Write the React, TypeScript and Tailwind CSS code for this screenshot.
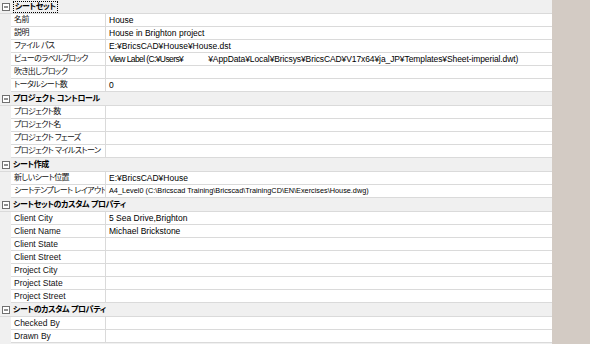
import React from 'react';

type Row = { name: string; value?: React.ReactNode };
type Section = { title: string; focus?: boolean; rows: Row[] };

const sections: Section[] = [
  {
    title: 'シートセット',
    focus: true,
    rows: [
      { name: '名前', value: 'House' },
      { name: '説明', value: 'House in Brighton project' },
      { name: 'ファイル パス', value: 'E:¥BricsCAD¥House¥House.dst' },
      {
        name: 'ビューのラベルブロック',
        value: (
          <>
            <span className="tracking-[-0.6px]">View Label (C:¥Users¥</span>
            <span className="inline-block w-[25px]" />
            <span className="tracking-[-0.1px]">¥AppData¥Local¥Bricsys¥BricsCAD¥V17x64¥ja_JP¥Templates¥Sheet-imperial.dwt)</span>
          </>
        ),
      },
      { name: '吹き出しブロック' },
      { name: 'トータルシート数', value: '0' },
    ],
  },
  {
    title: 'プロジェクト コントロール',
    rows: [
      { name: 'プロジェクト数' },
      { name: 'プロジェクト名' },
      { name: 'プロジェクト フェーズ' },
      { name: 'プロジェクト マイルストーン' },
    ],
  },
  {
    title: 'シート作成',
    rows: [
      { name: '新しいシート位置', value: 'E:¥BricsCAD¥House' },
      {
        name: 'シートテンプレート レイアウト',
        value: (
          <span className="text-[7.3px]">
            A4_Level0 (C:\Bricscad Training\Bricscad\TrainingCD\EN\Exercises\House.dwg)
          </span>
        ),
      },
    ],
  },
  {
    title: 'シートセットのカスタム プロパティ',
    rows: [
      { name: 'Client City', value: '5 Sea Drive,Brighton' },
      { name: 'Client Name', value: 'Michael Brickstone' },
      { name: 'Client State' },
      { name: 'Client Street' },
      { name: 'Project City' },
      { name: 'Project State' },
      { name: 'Project Street' },
    ],
  },
  {
    title: 'シートのカスタム プロパティ',
    rows: [{ name: 'Checked By' }, { name: 'Drawn By' }],
  },
];

const isJp = (s: string) => /[^\x00-\x7F]/.test(s);

function Toggle() {
  return (
    <svg width="8" height="8" viewBox="0 0 8 8" className="shrink-0">
      <rect x="0.5" y="0.5" width="7" height="7" fill="#fff" stroke="#707070" />
      <line x1="2" y1="4" x2="6" y2="4" stroke="#222" />
    </svg>
  );
}

export default function App() {
  return (
    <div className="flex w-[590px] h-[344px] overflow-hidden bg-[#f0f0f0] text-black text-[8.5px] leading-none font-['Liberation_Sans','Noto_Sans_CJK_JP',sans-serif] [font-feature-settings:'palt']">
      <div className="w-[552px] shrink-0">
        {sections.map((s) => (
          <div key={s.title}>
            {/* section header */}
            <div className="flex items-center h-[14px] border-b border-[#dadada] bg-[#f0f0f0] pl-[2px]">
              <Toggle />
              <span
                className={
                  'ml-[3px] font-bold text-[8px] tracking-[-0.4px] ' +
                  (s.focus ? 'border border-dotted border-black px-[1px] py-[1px]' : '')
                }
              >
                {s.title}
              </span>
            </div>
            {s.rows.map((r) => (
              <div key={r.name} className="flex h-[13px]">
                <div className="w-[11px] shrink-0 bg-[#f0f0f0]" />
                <div
                  className={
                    'w-[95px] shrink-0 flex items-center pl-[3px] bg-white border-b border-r border-[#dadada] whitespace-nowrap overflow-hidden text-[#111] ' +
                    (isJp(r.name) ? 'text-[8px] tracking-[-0.6px]' : '')
                  }
                >
                  {r.name}
                </div>
                <div className="flex-1 flex items-center pl-[3px] bg-white border-b border-[#dadada] whitespace-nowrap overflow-hidden">
                  {r.value}
                </div>
              </div>
            ))}
          </div>
        ))}
      </div>
      <div className="flex-1 bg-[#d3cbc4]" />
    </div>
  );
}
